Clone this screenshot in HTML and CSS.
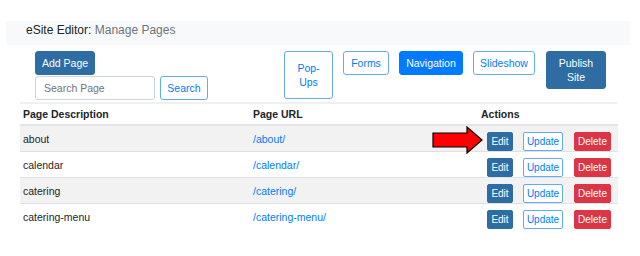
FILE: index.html
```html
<!DOCTYPE html>
<html lang="en">
<head>
    <meta charset="UTF-8">
    <title>eSite Editor: Manage Pages</title>
    <link rel="stylesheet" href="styles.css">
</head>
<body>
    <!-- Page title band -->
    <div class="title-bar">
        <span class="title-main">eSite Editor:</span> <span class="title-sub">Manage Pages</span>
    </div>

    <!-- Toolbar -->
    <div class="toolbar">
        <div class="left-tools">
            <button class="btn btn-dark">Add Page</button>
            <div class="search-row">
                <input class="search-input" type="text" placeholder="Search Page">
                <button class="btn btn-outline btn-search">Search</button>
            </div>
        </div>
        <div class="right-tools">
            <button class="btn btn-outline btn-tall">Pop-<br>Ups</button>
            <button class="btn btn-outline btn-forms">Forms</button>
            <button class="btn btn-primary">Navigation</button>
            <button class="btn btn-outline btn-slides">Slideshow</button>
            <button class="btn btn-dark btn-publish">Publish<br>Site</button>
        </div>
    </div>

    <!-- Pages table -->
    <div class="table-wrap">
        <table class="pages">
            <thead>
                <tr>
                    <th class="col-desc">Page Description</th>
                    <th class="col-url">Page URL</th>
                    <th class="col-actions">Actions</th>
                </tr>
            </thead>
            <tbody>
                <tr>
                    <td>about</td>
                    <td><a href="#">/about/</a></td>
                    <td class="actions"><div class="action-row"><button class="sm sm-edit">Edit</button><button class="sm sm-update">Update</button><button class="sm sm-delete">Delete</button></div></td>
                </tr>
                <tr>
                    <td>calendar</td>
                    <td><a href="#">/calendar/</a></td>
                    <td class="actions"><div class="action-row"><button class="sm sm-edit">Edit</button><button class="sm sm-update">Update</button><button class="sm sm-delete">Delete</button></div></td>
                </tr>
                <tr>
                    <td>catering</td>
                    <td><a href="#">/catering/</a></td>
                    <td class="actions"><div class="action-row"><button class="sm sm-edit">Edit</button><button class="sm sm-update">Update</button><button class="sm sm-delete">Delete</button></div></td>
                </tr>
                <tr>
                    <td>catering-menu</td>
                    <td><a href="#">/catering-menu/</a></td>
                    <td class="actions"><div class="action-row"><button class="sm sm-edit">Edit</button><button class="sm sm-update">Update</button><button class="sm sm-delete">Delete</button></div></td>
                </tr>
            </tbody>
        </table>

        <!-- Red pointer arrow -->
        <svg class="arrow" width="52" height="28" viewBox="0 0 52 28">
            <polygon points="1,7 35,7 35,1 50,14 35,27 35,21 1,21" fill="#ff0000" stroke="#000" stroke-width="1.2" stroke-linejoin="miter"/>
        </svg>
    </div>
</body>
</html>
```

FILE: styles.css
```css
/* Basic page styling */
body {
    margin: 0;
    background: #fff;
    font-family: "Liberation Sans", Arial, sans-serif;
    color: #212529;
}

/* Title band */
.title-bar {
    margin: 21px 10px 0 6px;
    height: 24px;
    padding-left: 20px;
    background: #f8f9fa;
    font-size: 12px;
    line-height: 18px;
}

.title-main {
    color: #212529;
}

.title-sub {
    color: #6c757d;
}

/* Toolbar */
.toolbar {
    display: flex;
    align-items: flex-start;
    padding: 6px 0 0 35px;
    height: 51px;
}

.left-tools {
    display: flex;
    flex-direction: column;
    align-items: flex-start;
    gap: 1px;
}

.search-row {
    display: flex;
    gap: 5px;
}

.search-input {
    box-sizing: border-box;
    width: 120px;
    height: 24px;
    border: 1px solid #ced4da;
    border-radius: 3px;
    padding: 0 8px;
    font-family: inherit;
    font-size: 10.5px;
    color: #495057;
}

.search-input::placeholder {
    color: #6c757d;
}

.right-tools {
    display: flex;
    align-items: flex-start;
    gap: 10px;
    margin-left: 76px;
}

.btn {
    box-sizing: border-box;
    height: 24px;
    padding: 0 6px;
    border-radius: 3px;
    font-family: inherit;
    font-size: 10.5px;
    line-height: 14px;
    cursor: pointer;
}

.btn-dark {
    background: #2e6da4;
    border: 1px solid #2e6da4;
    color: #fff;
}

.btn-primary {
    background: #007bff;
    border: 1px solid #007bff;
    color: #fff;
    width: 64px;
}

.btn-outline {
    background: #fff;
    border: 1px solid #64a9f5;
    color: #007bff;
}

.btn-tall {
    width: 49px;
    height: 48px;
}

.btn-forms {
    width: 46px;
}

.btn-slides {
    width: 62px;
}

.btn-publish {
    width: 60px;
    height: 38px;
    margin-left: 1px;
}

.btn-search {
    width: 48px;
}

/* Table */
.table-wrap {
    position: relative;
    margin: 0 22px 0 20px;
}

.pages {
    width: 100%;
    border-collapse: collapse;
    font-size: 10.5px;
}

.pages th {
    height: 20px;
    text-align: left;
    font-weight: bold;
    padding: 0 3px;
    border-top: 2px solid #eef0f2;
    border-bottom: 2px solid #e3e5e8;
    vertical-align: middle;
}

.col-desc {
    width: 224px;
}

.col-url {
    width: 222px;
}

.pages td {
    height: 22px;
    padding: 2px 3px 1px;
    border-top: 1px solid #dee2e6;
    vertical-align: middle;
    line-height: 14px;
}

.pages tbody tr:nth-child(odd) {
    background: #f2f2f2;
}

.pages a {
    color: #007bff;
    text-decoration: none;
}

.pages td.actions {
    height: 20px;
    padding: 5px 0 0 9px;
}

.action-row {
    display: flex;
    gap: 10px;
}

/* Small row buttons */
.sm {
    box-sizing: border-box;
    height: 19px;
    padding: 0;
    border-radius: 2px;
    font-family: inherit;
    font-size: 10px;
    cursor: pointer;
}

.sm-edit {
    width: 26px;
    background: #2e6da4;
    border: 1px solid #2e6da4;
    color: #fff;
}

.sm-update {
    width: 40px;
    background: #fff;
    border: 1px solid #64a9f5;
    color: #007bff;
}

.sm-delete {
    width: 37px;
    margin-left: 1px;
    background: #dc3545;
    border: 1px solid #dc3545;
    color: #fff;
}

/* Pointer arrow overlay */
.arrow {
    position: absolute;
    left: 412px;
    top: 24px;
}
```
